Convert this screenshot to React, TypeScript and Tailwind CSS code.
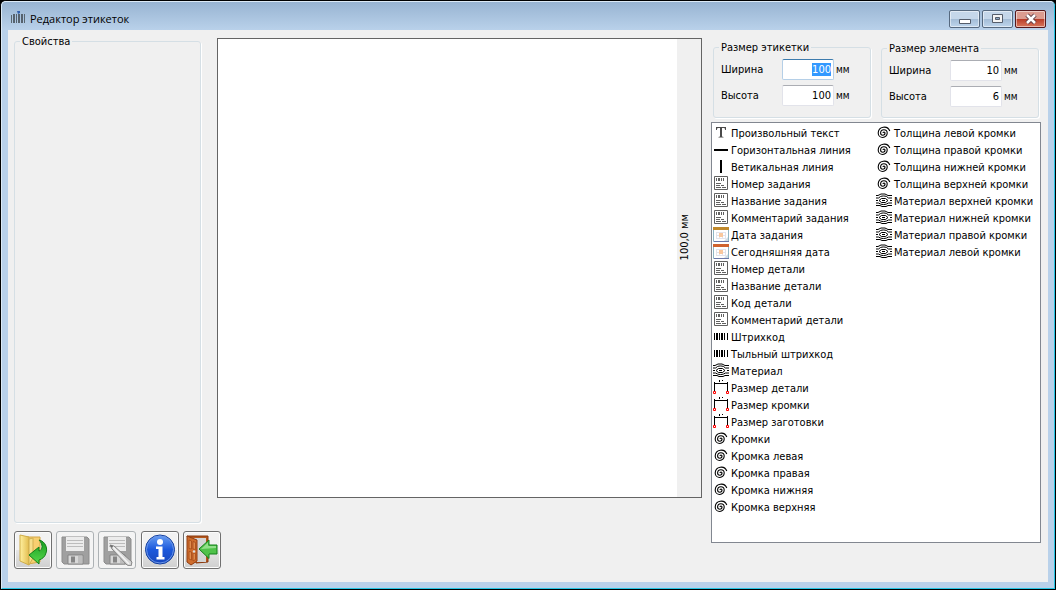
import type { ReactNode } from "react";
import clsx from "clsx";

type IconName =
	| "text"
	| "hline"
	| "vline"
	| "label"
	| "date"
	| "today"
	| "barcode"
	| "wood"
	| "size"
	| "spiral";

type ListItem = { icon: IconName; title: string };

const leftItems: ListItem[] = [
	{ icon: "text", title: "Произвольный текст" },
	{ icon: "hline", title: "Горизонтальная линия" },
	{ icon: "vline", title: "Ветикальная линия" },
	{ icon: "label", title: "Номер задания" },
	{ icon: "label", title: "Название задания" },
	{ icon: "label", title: "Комментарий задания" },
	{ icon: "date", title: "Дата задания" },
	{ icon: "today", title: "Сегодняшняя дата" },
	{ icon: "label", title: "Номер детали" },
	{ icon: "label", title: "Название детали" },
	{ icon: "label", title: "Код детали" },
	{ icon: "label", title: "Комментарий детали" },
	{ icon: "barcode", title: "Штрихкод" },
	{ icon: "barcode", title: "Тыльный штрихкод" },
	{ icon: "wood", title: "Материал" },
	{ icon: "size", title: "Размер детали" },
	{ icon: "size", title: "Размер кромки" },
	{ icon: "size", title: "Размер заготовки" },
	{ icon: "spiral", title: "Кромки" },
	{ icon: "spiral", title: "Кромка левая" },
	{ icon: "spiral", title: "Кромка правая" },
	{ icon: "spiral", title: "Кромка нижняя" },
	{ icon: "spiral", title: "Кромка верхняя" },
];

const rightItems: ListItem[] = [
	{ icon: "spiral", title: "Толщина левой кромки" },
	{ icon: "spiral", title: "Толщина правой кромки" },
	{ icon: "spiral", title: "Толщина нижней кромки" },
	{ icon: "spiral", title: "Толщина верхней кромки" },
	{ icon: "wood", title: "Материал верхней кромки" },
	{ icon: "wood", title: "Материал нижней кромки" },
	{ icon: "wood", title: "Материал правой кромки" },
	{ icon: "wood", title: "Материал левой кромки" },
];

const Calendar = ({ top }: { top: string }) => (
	<>
		<path d="M0.5 2v13.5h15V2" fill="#fff" stroke="#8fb6c4" />
		<path d="M1 15.5h15" stroke="#6a78a8" />
		<path d="M0 2.5h16" stroke={top} strokeWidth="3" />
		<path d="M3 6.5h9M3 9.5h9M3 12.5h9M3.5 6v7M6.5 6v7M9.5 6v7M12.5 6v7" stroke="#e3e3ea" />
		<rect x="6" y="7" width="4" height="4" fill="#f9c79c" />
		<path d="M11 15l4-4v4z" fill="#cfdde6" />
	</>
);

const icons: Record<IconName, ReactNode> = {
	text: (
		<path
			d="M3 3h10v3h-.8L11.500 4H9v8.500l1.500.5v.5h-5V13l1.500-.5V4H4.500l-.7 2H3z"
			fill="#4a4a4a"
		/>
	),
	hline: <path d="M1 9h14" stroke="#000" strokeWidth="2" />,
	vline: <path d="M8 2v13" stroke="#000" strokeWidth="2" />,
	label: (
		<g stroke="#606060" fill="none">
			<path d="M1.5 1.5h13v13h-13z" fill="#fff" />
			<path d="M3.5 3v3M5.5 3v3M6.5 3v3M8.5 3v3M10.5 3v3M3 8.5h5M3 10.5h4M8 10.5h3M3 12.5h5M9 12.5h4" />
		</g>
	),
	date: <Calendar top="#c0892c" />,
	today: <Calendar top="#d0632f" />,
	barcode: <path d="M1 5h1v7H1zM3 5h2v7H3zM6 5h1v7H6zM8 5h2v7H8zM11 5h1v7h-1zM14 5h1v7h-1z" fill="#000" />,
	wood: (
		<g fill="none" stroke="#000">
			<path d="M0 3.5h2l3-1.500h4l3 1.500h4M0 6h2.500l2-1.500c2-.7 4-.7 6 0l2 1.500H16" />
			<path d="M0 13.5h4l2 1h4l2-1h4M0 11h2.500l2 1c2 .7 4 .7 6 0l2-1H16" />
			<path d="M0 8.500h2M16 8.500h-2" />
			<path d="M3 8.500L5.500 6.500h4L12 8.500l-2.500 2h-4z" />
			<path d="M6 8.500h3" />
		</g>
	),
	size: (
		<g fill="none">
			<path d="M1.5 3v9M14.5 3v9M1 4.5h14M6.5 1v2M9.5 1v1" stroke="#000" />
			<path d="M0.5 12.5h2v2h-2zM13.5 12.5h2v2h-2z" stroke="#f00" />
		</g>
	),
	spiral: (
		<path
			d="M7 9a1 1 0 0 1 2 0a2.200 2.200 0 0 1-4.400 0a3.300 3.300 0 0 1 6.600 0a4.500 4.500 0 0 1-9 0a6 6 0 0 1 11.600-2"
			fill="none"
			stroke="#000"
			strokeWidth="1.100"
		/>
	),
};

const ItemList = ({ items }: { items: ListItem[] }) => (
	<ul>
		{items.map((item) => (
			<li key={item.title} className="flex h-[17px] items-start gap-0.5 whitespace-nowrap leading-[19px]">
				<svg viewBox="0 0 16 16" className="size-4 shrink-0">
					{icons[item.icon]}
				</svg>
				<span>{item.title}</span>
			</li>
		))}
	</ul>
);

type GroupProps = { title: string; className?: string; children?: ReactNode };

const Group = ({ title, className, children }: GroupProps) => (
	<fieldset
		className={clsx(
			"min-w-0 rounded-[3px] border border-[#d5dfe5] px-[5px] shadow-[1px_1px_0_#fff]",
			className,
		)}
	>
		<legend className="px-0.5 leading-[13px]">{title}</legend>
		{children}
	</fieldset>
);

type SizeFieldProps = { id: string; label: string; value: string; active?: boolean };

const SizeField = ({ id, label, value, active }: SizeFieldProps) => (
	<div className="flex items-center pl-0.5">
		<label htmlFor={id} className="w-[61px]">
			{label}
		</label>
		<input
			id={id}
			defaultValue={value}
			autoFocus={active}
			onFocus={(e) => e.target.select()}
			className={clsx(
				"h-[21px] w-[52px] rounded-[2px] border bg-white pr-0.5 text-right outline-none selection:bg-[#3399ff] selection:text-white",
				active
					? "border-[#b5cfe7] border-t-[#3d7bad]"
					: "border-[#e2e3ea] border-t-[#abadb3]",
			)}
		/>
		<span className="pl-0.5 text-[10px]">мм</span>
	</div>
);

type ToolButtonProps = { label: string; disabled?: boolean; children: ReactNode };

const ToolButton = ({ label, disabled, children }: ToolButtonProps) => (
	<button
		aria-label={label}
		disabled={disabled}
		className={clsx(
			"flex size-[38px] items-center justify-center rounded-[3px] border",
			disabled
				? "border-[#adb2b5] bg-[#f4f4f4]"
				: "border-[#707070] bg-linear-to-b from-[#f2f2f2] from-50% via-[#e6e6e6] via-50% to-[#cfcfcf] inset-shadow-[0_0_0_1px_#fcfcfc]",
		)}
	>
		<svg viewBox="0 0 32 32" className="size-8">
			{children}
		</svg>
	</button>
);

const Floppy = () => (
	<>
		<path d="M3 3h25l2 2v25H5l-2-2z" fill="#a0a0a0" stroke="#8d8d8d" />
		<path d="M7 3h18v14H7z" fill="#ececec" />
		<path d="M8 6.5h16M8 9.5h16M8 12.5h16" stroke="#bcbcbc" />
		<path d="M9 21h15v9H9z" fill="#d8d8d8" stroke="#858585" />
		<path d="M12 22.5h4v6h-4z" fill="#858585" />
		<path d="M19 22h4v7h-4z" fill="#bdbdbd" />
	</>
);

const Toolbar = () => (
	<div className="flex gap-1">
		<ToolButton label="Открыть">
			<defs>
				<linearGradient id="folder">
					<stop offset="0" stopColor="#fff0a0" />
					<stop offset="1" stopColor="#e3bd4f" />
				</linearGradient>
				<linearGradient id="green" x2="0" y2="1">
					<stop offset="0" stopColor="#159d20" />
					<stop offset="1" stopColor="#58d84b" />
				</linearGradient>
			</defs>
			<path d="M8 3h15v25l-12 2z" fill="#f7cf70" stroke="#d3a647" />
			<path d="M3 1l9 2v28l-9-4z" fill="url(#folder)" stroke="#cfad48" />
			<path d="M12 5l4-1v20l-4 7z" fill="#f5df8b" stroke="#d0af51" />
			<path
				d="M22 6c6 1 9 8 7 13-1 4-4 6-7 7v4l-10-9 10-8v4c4-1 4-7 0-11z"
				fill="url(#green)"
				stroke="#127f19"
			/>
		</ToolButton>
		<ToolButton label="Сохранить" disabled>
			<Floppy />
		</ToolButton>
		<ToolButton label="Сохранить как" disabled>
			<Floppy />
			<path d="M9 11l4 1 18 16-1 4-4-1L11 15z" fill="#d6d6d6" stroke="#858585" />
			<path d="M12 13l16 17" stroke="#f4f4f4" strokeWidth="1.5" />
			<path d="M9 11l3 1-1 2z" fill="#666" />
		</ToolButton>
		<div className="pl-px">
			<ToolButton label="Информация">
				<defs>
					<linearGradient id="info" x2="0" y2="1">
						<stop offset="0" stopColor="#6aa0f4" />
						<stop offset="0.5" stopColor="#1c59dc" />
						<stop offset="1" stopColor="#1746bb" />
					</linearGradient>
				</defs>
				<circle cx="16" cy="15.5" r="14.5" fill="url(#info)" stroke="#143f9c" />
				<circle cx="16" cy="15.5" r="13.5" fill="none" stroke="#6c96e8" />
				<circle cx="16" cy="8" r="3" fill="#fff" />
				<path d="M12 12.5h6.500V23H20.500v2.500h-8V23h2v-8H12z" fill="#fff" />
			</ToolButton>
		</div>
		<ToolButton label="Выход">
			<path d="M1 2h21v26l-12 1z" fill="#b5571b" stroke="#87380f" />
			<path d="M4 4h16v24H9z" fill="#d4d4d4" />
			<path d="M1 2l10 4v21l-6 4-4-3z" fill="#cf6d2d" stroke="#913c11" />
			<path
				d="M3 6l2.500 1v8L3 14.500zM7 7.500l2.500 1v7L7 15zM3 17.500l2.500.5v8L3 25zM7 19l2.500.5v6L7 27z"
				fill="#e08a4a"
				stroke="#a44a18"
				strokeWidth="0.8"
			/>
			<circle cx="8" cy="17.5" r="1.2" fill="#ddd" />
			<path d="M13 15l10-9v5h8v9h-8v4.500z" fill="#4fc24a" stroke="#15801a" />
			<path d="M15 15l7-6.500V12h8v2z" fill="#91df89" />
		</ToolButton>
	</div>
);

const captionButton =
	"flex h-[18px] w-[31px] items-center justify-center rounded-[2px] border inset-shadow-[0_0_0_1px_#ffffff80]";
const captionBlue =
	"border-[#56697f] bg-linear-to-b from-[#c5d7ea] from-50% via-[#a3bcd6] via-50% to-[#bed5ec]";

const TitleBar = () => (
	<header className="flex h-[28px] items-start justify-between bg-linear-to-b from-[#98b4d2] to-[#b9d1ea] pl-2">
		<div className="flex gap-1 pt-2 font-['Open_Sans',sans-serif] leading-[18px]">
			<svg viewBox="0 0 16 16" className="size-4">
				<path d="M1.5 5v8M14.5 4v9" stroke="#59666f" />
				<path d="M3 4h2v9H3zM6 4h1v9H6zM8 4h2v9H8zM11 4h2v9h-2z" fill="#56626e" />
				<path d="M7 1h3v2L8 4z" fill="#315fab" />
			</svg>
			<h1>Редактор этикеток</h1>
		</div>
		<div className="flex gap-0.5 pr-2 pt-2">
			<button aria-label="Свернуть" className={clsx(captionButton, captionBlue)}>
				<svg viewBox="0 0 12 12" className="size-3">
					<path d="M0.5 6.5h11v4H0.500z" fill="#fff" stroke="#555d6b" />
				</svg>
			</button>
			<button aria-label="Развернуть" className={clsx(captionButton, captionBlue)}>
				<svg viewBox="0 0 12 12" className="size-3">
					<path d="M0.5 1.5h10v8h-10z" fill="#f4f4f4" stroke="#555d6b" />
					<path d="M3.5 4.5h4v2h-4z" fill="#8da7c4" stroke="#555d6b" />
				</svg>
			</button>
			<button
				aria-label="Закрыть"
				className={clsx(
					captionButton,
					"border-[#55171b] bg-linear-to-b from-[#dc9c90] from-50% via-[#b83a26] via-50% to-[#d8765c]",
				)}
			>
				<svg viewBox="0 0 12 12" className="size-3">
					<path d="M2 2l8 8M10 2l-8 8" stroke="#5b3b43" strokeWidth="4.5" />
					<path d="M2 2l8 8M10 2l-8 8" stroke="#fff" strokeWidth="2.5" />
				</svg>
			</button>
		</div>
	</header>
);

const App = () => {
	return (
		<div className="min-h-screen bg-black">
			<div className="flex min-h-screen flex-col rounded-t-[6px] border border-black bg-[#b9d1ea] font-['DejaVu_Sans_Condensed','Noto_Sans',sans-serif] text-[11px] leading-[13px] text-black">
				<div className="flex flex-1 flex-col overflow-hidden rounded-t-[5px] border border-[#26c5e4] border-l-[#dceaf6] border-t-[#dceaf6]">
					<TitleBar />
					<main className="mx-1.5 mb-1.5 flex flex-1 gap-[9px] bg-[#f0f0f0] pl-1.5 pr-[7px]">
						{/* PROPERTIES + LABEL */}
						<div className="flex flex-1 flex-col pb-[13px]">
							<div className="mb-2 flex flex-1 gap-4">
								<Group title="Свойства" className="mt-[5px] w-[187px]" />
								<section className="mb-[25px] mt-2 flex flex-1 border border-[#646464] bg-white">
									<div className="ml-auto flex w-6 items-center justify-center bg-[#f0f0f0] pb-[62px] pr-2.5">
										<span className="rotate-180 whitespace-nowrap [writing-mode:vertical-rl]">
											100,0 мм
										</span>
									</div>
								</section>
							</div>
							<Toolbar />
						</div>

						{/* SIZES + ELEMENTS */}
						<div className="flex w-[330px] flex-col pb-[39px] pt-[11px]">
							<div className="mb-1 flex h-[77px] justify-between px-0.5">
								<Group title="Размер этикетки" className="w-[158px]">
									<div className="flex flex-col gap-[5px] pt-[5px]">
										<SizeField id="label-width" label="Ширина" value="100" active />
										<SizeField id="label-height" label="Высота" value="100" />
									</div>
								</Group>
								<Group title="Размер элемента" className="mt-px w-[158px]">
									<div className="flex flex-col gap-[5px] pt-[5px]">
										<SizeField id="item-width" label="Ширина" value="10" />
										<SizeField id="item-height" label="Высота" value="6" />
									</div>
								</Group>
							</div>
							<div className="flex flex-1 border border-[#828790] bg-white py-px pl-px">
								<div className="w-[163px]">
									<ItemList items={leftItems} />
								</div>
								<ItemList items={rightItems} />
							</div>
						</div>
					</main>
				</div>
			</div>
		</div>
	);
};

export default App;
